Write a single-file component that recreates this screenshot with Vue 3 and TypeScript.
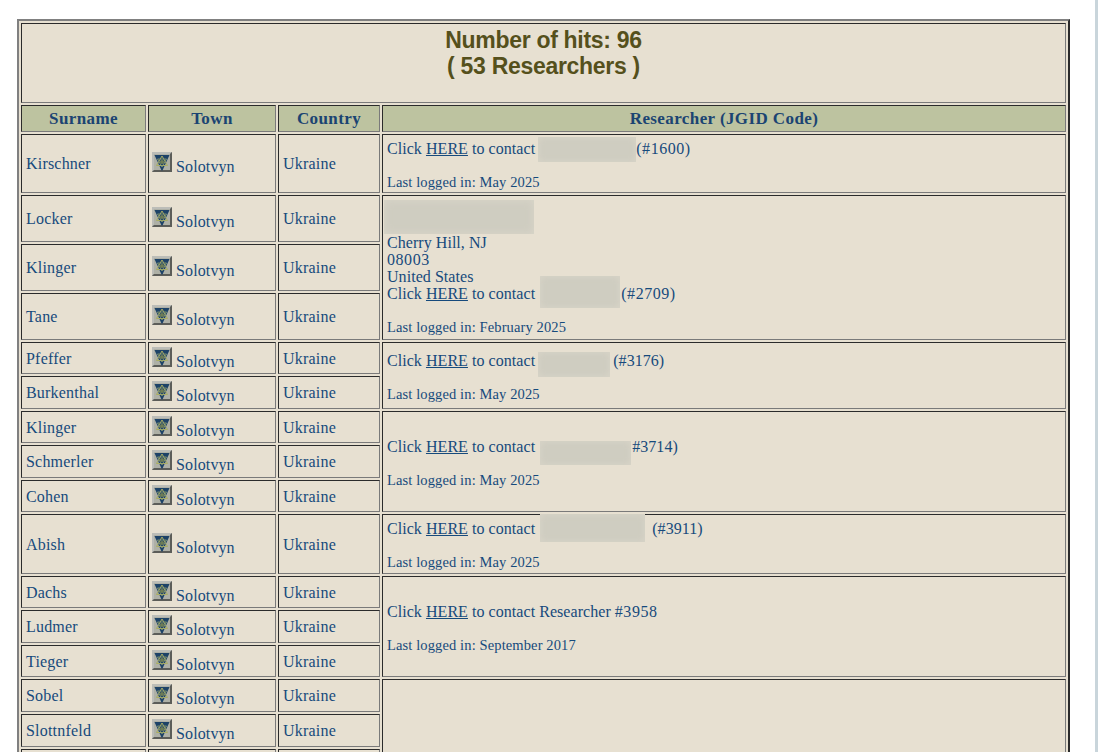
<script setup lang="ts">
interface Row {
  surname: string
  h: number
  blank?: boolean
  researcher?: { span: number; kind: string }
}
const rows: Row[] = [
  { surname: 'Kirschner', h: 59, researcher: { span: 1, kind: 'a' } },
  { surname: 'Locker', h: 47, researcher: { span: 3, kind: 'b' } },
  { surname: 'Klinger', h: 47 },
  { surname: 'Tane', h: 47 },
  { surname: 'Pfeffer', h: 32, researcher: { span: 2, kind: 'c' } },
  { surname: 'Burkenthal', h: 33 },
  { surname: 'Klinger', h: 32, researcher: { span: 3, kind: 'd' } },
  { surname: 'Schmerler', h: 33 },
  { surname: 'Cohen', h: 32 },
  { surname: 'Abish', h: 60, researcher: { span: 1, kind: 'e' } },
  { surname: 'Dachs', h: 32, researcher: { span: 3, kind: 'f' } },
  { surname: 'Ludmer', h: 33 },
  { surname: 'Tieger', h: 32 },
  { surname: 'Sobel', h: 33, researcher: { span: 3, kind: 'g' } },
  { surname: 'Slottnfeld', h: 33 },
  { surname: '', h: 33, blank: true }
]
</script>

<template>
  <div class="page">
    <table class="hits">
      <colgroup>
        <col class="c1" /><col class="c2" /><col class="c3" /><col />
      </colgroup>
      <tbody>
        <tr class="title-row">
          <td colspan="4" class="title">Number of hits: 96<br />( 53 Researchers )</td>
        </tr>
        <tr class="head-row">
          <th>Surname</th><th>Town</th><th>Country</th><th>Researcher (JGID Code)</th>
        </tr>
        <tr v-for="(r, i) in rows" :key="i" :style="{ height: r.h + 'px' }">
          <td>{{ r.surname }}</td>
          <td class="town">
            <template v-if="!r.blank">
              <svg class="flag" width="20" height="20" viewBox="0 0 20 20">
                <rect width="20" height="20" fill="#9a9c96" />
                <path d="M0 0H20L18 2H2V18L0 20Z" fill="#bcbdb8" />
                <path d="M20 20H0L2 18H18V2L20 0Z" fill="#5c5d59" />
                <rect x="2" y="2" width="16" height="16" fill="#aeb0a6" />
                <path d="M2.5 3H17.5L10.5 18.5H9.5Z" fill="#1d4267" />
                <path d="M10 4 15.5 13.5H4.5Z" fill="none" stroke="#a9ad63" stroke-width="1" />
                <path d="M10 15 5.5 7H14.5Z" fill="none" stroke="#87976f" stroke-width="0.9" />
                <circle cx="10" cy="10" r="2" fill="#6e7d55" />
              </svg>
              Solotvyn
            </template>
          </td>
          <td>{{ r.blank ? '' : 'Ukraine' }}</td>
          <td v-if="r.researcher" :rowspan="r.researcher.span" class="res">
            <template v-if="r.researcher.kind === 'a'">
              Click <a href="#">HERE</a> to contact <span class="blur w-a"></span><span class="wide">(#1600)</span><br /><br /><span class="log">Last logged in: May 2025</span>
            </template>
            <template v-else-if="r.researcher.kind === 'b'">
              <div class="blur-block"></div>
              Cherry Hill, NJ<br /><span class="wide">08003</span><br />United States<br />
              Click <a href="#">HERE</a> to contact <span class="blur w-b2"></span><span class="wide">(#2709)</span><br /><br /><span class="log">Last logged in: February 2025</span>
            </template>
            <template v-else-if="r.researcher.kind === 'c'">
              Click <a href="#">HERE</a> to contact <span class="blur w-c"></span>(#3176)<br /><br /><span class="log">Last logged in: May 2025</span>
            </template>
            <template v-else-if="r.researcher.kind === 'd'">
              Click <a href="#">HERE</a> to contact <span class="blur w-d"></span>#3714)<br /><br /><span class="log">Last logged in: May 2025</span>
            </template>
            <template v-else-if="r.researcher.kind === 'e'">
              Click <a href="#">HERE</a> to contact <span class="blur w-e"></span>(#3911)<br /><br /><span class="log">Last logged in: May 2025</span>
            </template>
            <template v-else-if="r.researcher.kind === 'f'">
              Click <a href="#">HERE</a> to contact Researcher <span class="wide">#3958</span><br /><br /><span class="log">Last logged in: September 2017</span>
            </template>
          </td>
        </tr>
      </tbody>
    </table>
    <div class="scroll"></div>
  </div>
</template>

<style>
html, body { margin: 0; padding: 0; background: #fff; overflow: hidden; }
</style>

<style scoped>
.page {
  position: relative;
  width: 1098px;
  height: 752px;
  overflow: hidden;
  padding: 19px 0 0 17px;
  box-sizing: border-box;
}
.scroll {
  position: absolute;
  right: 0;
  top: 0;
  width: 3px;
  height: 752px;
  background: #c9d5db;
}
.hits {
  width: 1053px;
  table-layout: fixed;
  border-collapse: separate;
  border-spacing: 2px;
  border: 2px solid;
  border-color: #808080 #2b2b2b #2b2b2b #808080;
  background: #e7e0d1;
  color: #164a7c;
  font: 16px/17px "Liberation Serif", "DejaVu Serif", serif;
  letter-spacing: 0.2px;
}
.c1 { width: 125px; }
.c2 { width: 128px; }
.c3 { width: 102px; }
td, th {
  border: 1px solid;
  border-color: #2b2b2b #7a7a7a #7a7a7a #2b2b2b;
  padding: 0 4px;
  text-align: left;
  vertical-align: middle;
}
.title-row { height: 80px; }
.title {
  font: bold 23px/26px "Liberation Sans", Arial, sans-serif;
  letter-spacing: -0.3px;
  color: #55501c;
  text-align: center;
  vertical-align: top;
  padding-top: 3px;
}
.head-row { height: 27px; }
th {
  background: #bdc3a0;
  color: #1b4472;
  text-align: center;
  font-size: 17px;
  letter-spacing: 0.4px;
}
.flag { vertical-align: baseline; }
.town { padding-left: 3px; letter-spacing: 0.1px; }
.res { letter-spacing: 0.05px; padding-top: 3px; }
.wide { letter-spacing: 0.55px; }
.log { font-size: 14.5px; line-height: 14px; letter-spacing: 0.12px; vertical-align: 1px; }
a { color: #164a7c; text-decoration: underline; }
.blur {
  display: inline-block;
  vertical-align: baseline;
  background: #cfcdc1;
  box-shadow: inset 0 0 6px #dad6c9;
}
.blur-block {
  width: 150px;
  height: 34px;
  margin: -2px 0 0 -3px;
  background: #cfcdc1;
  box-shadow: inset 0 0 8px #dad6c9;
}
.w-a { width: 98px; height: 25px; margin: -17px 0 -8px -1px; }
.w-b2 { width: 80px; height: 32px; margin: -23px 1px -9px 1px; }
.w-c { width: 72px; height: 25px; margin: -14px 3px -11px -1px; }
.w-d { width: 91px; height: 24px; margin: -11px 1px -13px 1px; }
.w-e { width: 105px; height: 28px; margin: -20px 7px -8px 1px; }
</style>
